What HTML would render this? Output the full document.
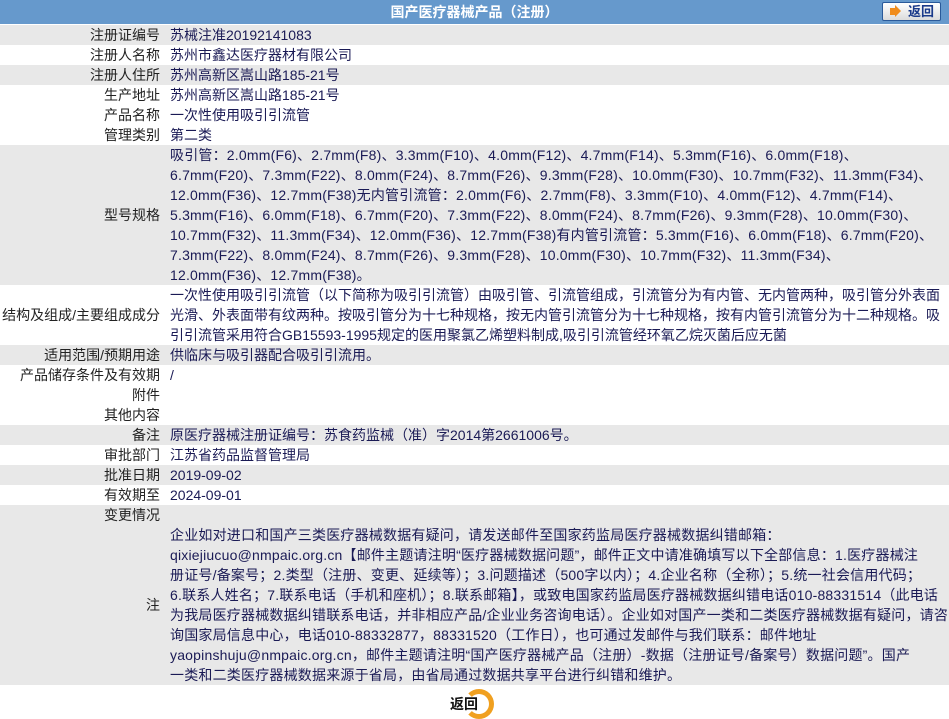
<!DOCTYPE html>
<html><head><meta charset="utf-8"><style>
body{margin:0;background:#fff;font-family:"Liberation Sans","Noto Sans CJK SC",sans-serif;font-size:14px;width:949px;height:716px;overflow:hidden;position:relative}
.hd{height:24px;background:#6699cc;color:#fff;font-weight:bold;text-align:center;line-height:24px;font-size:14px;position:relative}
.btn{position:absolute;left:882px;top:2px;width:59px;height:19px;border:1px solid #2a5a9a;border-radius:2px;background:linear-gradient(#fff,#dcdcdc);box-sizing:border-box;color:#1a3a8a;font-size:13px;line-height:17px;text-align:left;font-weight:bold}
.btn i{position:absolute;left:7px;top:5px;width:5px;height:7px;background:#f08c1c}
.btn b{position:absolute;left:12px;top:2px;border-left:6px solid #f08c1c;border-top:6px solid transparent;border-bottom:6px solid transparent}
.btn span{position:absolute;left:25px;top:0}
table{border-collapse:collapse;width:949px;margin-top:1px;table-layout:fixed}
td{padding:0;line-height:20px;vertical-align:middle;overflow:visible}
td.l{text-align:right;color:#222;padding-right:10px;white-space:nowrap}
td.v{color:#1a1a55}
tr.g td{background:#e8e8e8}
.sp{letter-spacing:0.2px}
.ret{position:absolute;left:450px;top:694px;font-weight:bold;color:#111;font-size:14px}
.circ{position:absolute;left:464px;top:689px;width:30px;height:30px;border-radius:50%;border:5px solid #f0a020;border-left-color:transparent;box-sizing:border-box;background:transparent}
</style></head><body>
<div class="hd">国产医疗器械产品（注册）<div class="btn"><i></i><b></b><span>返回</span></div></div>
<table>
<colgroup><col style="width:170px"><col style="width:779px"></colgroup>
<tr class="g"><td class="l">注册证编号</td><td class="v">苏械注准20192141083</td></tr>
<tr><td class="l">注册人名称</td><td class="v">苏州市鑫达医疗器材有限公司</td></tr>
<tr class="g"><td class="l">注册人住所</td><td class="v">苏州高新区嵩山路185-21号</td></tr>
<tr><td class="l">生产地址</td><td class="v">苏州高新区嵩山路185-21号</td></tr>
<tr><td class="l">产品名称</td><td class="v">一次性使用吸引引流管</td></tr>
<tr><td class="l">管理类别</td><td class="v">第二类</td></tr>
<tr class="g"><td class="l">型号规格</td><td class="v sp" style="white-space:nowrap">吸引管：2.0mm(F6)、2.7mm(F8)、3.3mm(F10)、4.0mm(F12)、4.7mm(F14)、5.3mm(F16)、6.0mm(F18)、<br>6.7mm(F20)、7.3mm(F22)、8.0mm(F24)、8.7mm(F26)、9.3mm(F28)、10.0mm(F30)、10.7mm(F32)、11.3mm(F34)、<br>12.0mm(F36)、12.7mm(F38)无内管引流管：2.0mm(F6)、2.7mm(F8)、3.3mm(F10)、4.0mm(F12)、4.7mm(F14)、<br>5.3mm(F16)、6.0mm(F18)、6.7mm(F20)、7.3mm(F22)、8.0mm(F24)、8.7mm(F26)、9.3mm(F28)、10.0mm(F30)、<br>10.7mm(F32)、11.3mm(F34)、12.0mm(F36)、12.7mm(F38)有内管引流管：5.3mm(F16)、6.0mm(F18)、6.7mm(F20)、<br>7.3mm(F22)、8.0mm(F24)、8.7mm(F26)、9.3mm(F28)、10.0mm(F30)、10.7mm(F32)、11.3mm(F34)、<br>12.0mm(F36)、12.7mm(F38)。</td></tr>
<tr><td class="l">结构及组成/主要组成成分</td><td class="v" style="white-space:nowrap">一次性使用吸引引流管（以下简称为吸引引流管）由吸引管、引流管组成，引流管分为有内管、无内管两种，吸引管分外表面<br>光滑、外表面带有纹两种。按吸引管分为十七种规格，按无内管引流管分为十七种规格，按有内管引流管分为十二种规格。吸<br>引引流管采用符合GB15593-1995规定的医用聚氯乙烯塑料制成,吸引引流管经环氧乙烷灭菌后应无菌</td></tr>
<tr class="g"><td class="l">适用范围/预期用途</td><td class="v">供临床与吸引器配合吸引引流用。</td></tr>
<tr><td class="l">产品储存条件及有效期</td><td class="v">/</td></tr>
<tr><td class="l">附件</td><td class="v"></td></tr>
<tr><td class="l">其他内容</td><td class="v"></td></tr>
<tr class="g"><td class="l">备注</td><td class="v">原医疗器械注册证编号：苏食药监械（准）字2014第2661006号。</td></tr>
<tr><td class="l">审批部门</td><td class="v">江苏省药品监督管理局</td></tr>
<tr class="g"><td class="l">批准日期</td><td class="v">2019-09-02</td></tr>
<tr><td class="l">有效期至</td><td class="v">2024-09-01</td></tr>
<tr class="g"><td class="l">变更情况</td><td class="v"></td></tr>
<tr class="g"><td class="l">注</td><td class="v" style="line-height:20px;padding:0;white-space:nowrap;font-size:14px;letter-spacing:0.2px">企业如对进口和国产三类医疗器械数据有疑问，请发送邮件至国家药监局医疗器械数据纠错邮箱：<br>qixiejiucuo@nmpaic.org.cn【邮件主题请注明“医疗器械数据问题”，邮件正文中请准确填写以下全部信息：1.医疗器械注<br>册证号/备案号；2.类型（注册、变更、延续等）；3.问题描述（500字以内）；4.企业名称（全称）；5.统一社会信用代码；<br>6.联系人姓名；7.联系电话（手机和座机）；8.联系邮箱】，或致电国家药监局医疗器械数据纠错电话010-88331514（此电话<br>为我局医疗器械数据纠错联系电话，并非相应产品/企业业务咨询电话）。企业如对国产一类和二类医疗器械数据有疑问，请咨<br>询国家局信息中心，电话010-88332877，88331520（工作日），也可通过发邮件与我们联系：邮件地址<br>yaopinshuju@nmpaic.org.cn，邮件主题请注明“国产医疗器械产品（注册）-数据（注册证号/备案号）数据问题”。国产<br>一类和二类医疗器械数据来源于省局，由省局通过数据共享平台进行纠错和维护。</td></tr>
</table>
<div class="circ"></div>
<div class="ret">返回</div>
</body></html>
